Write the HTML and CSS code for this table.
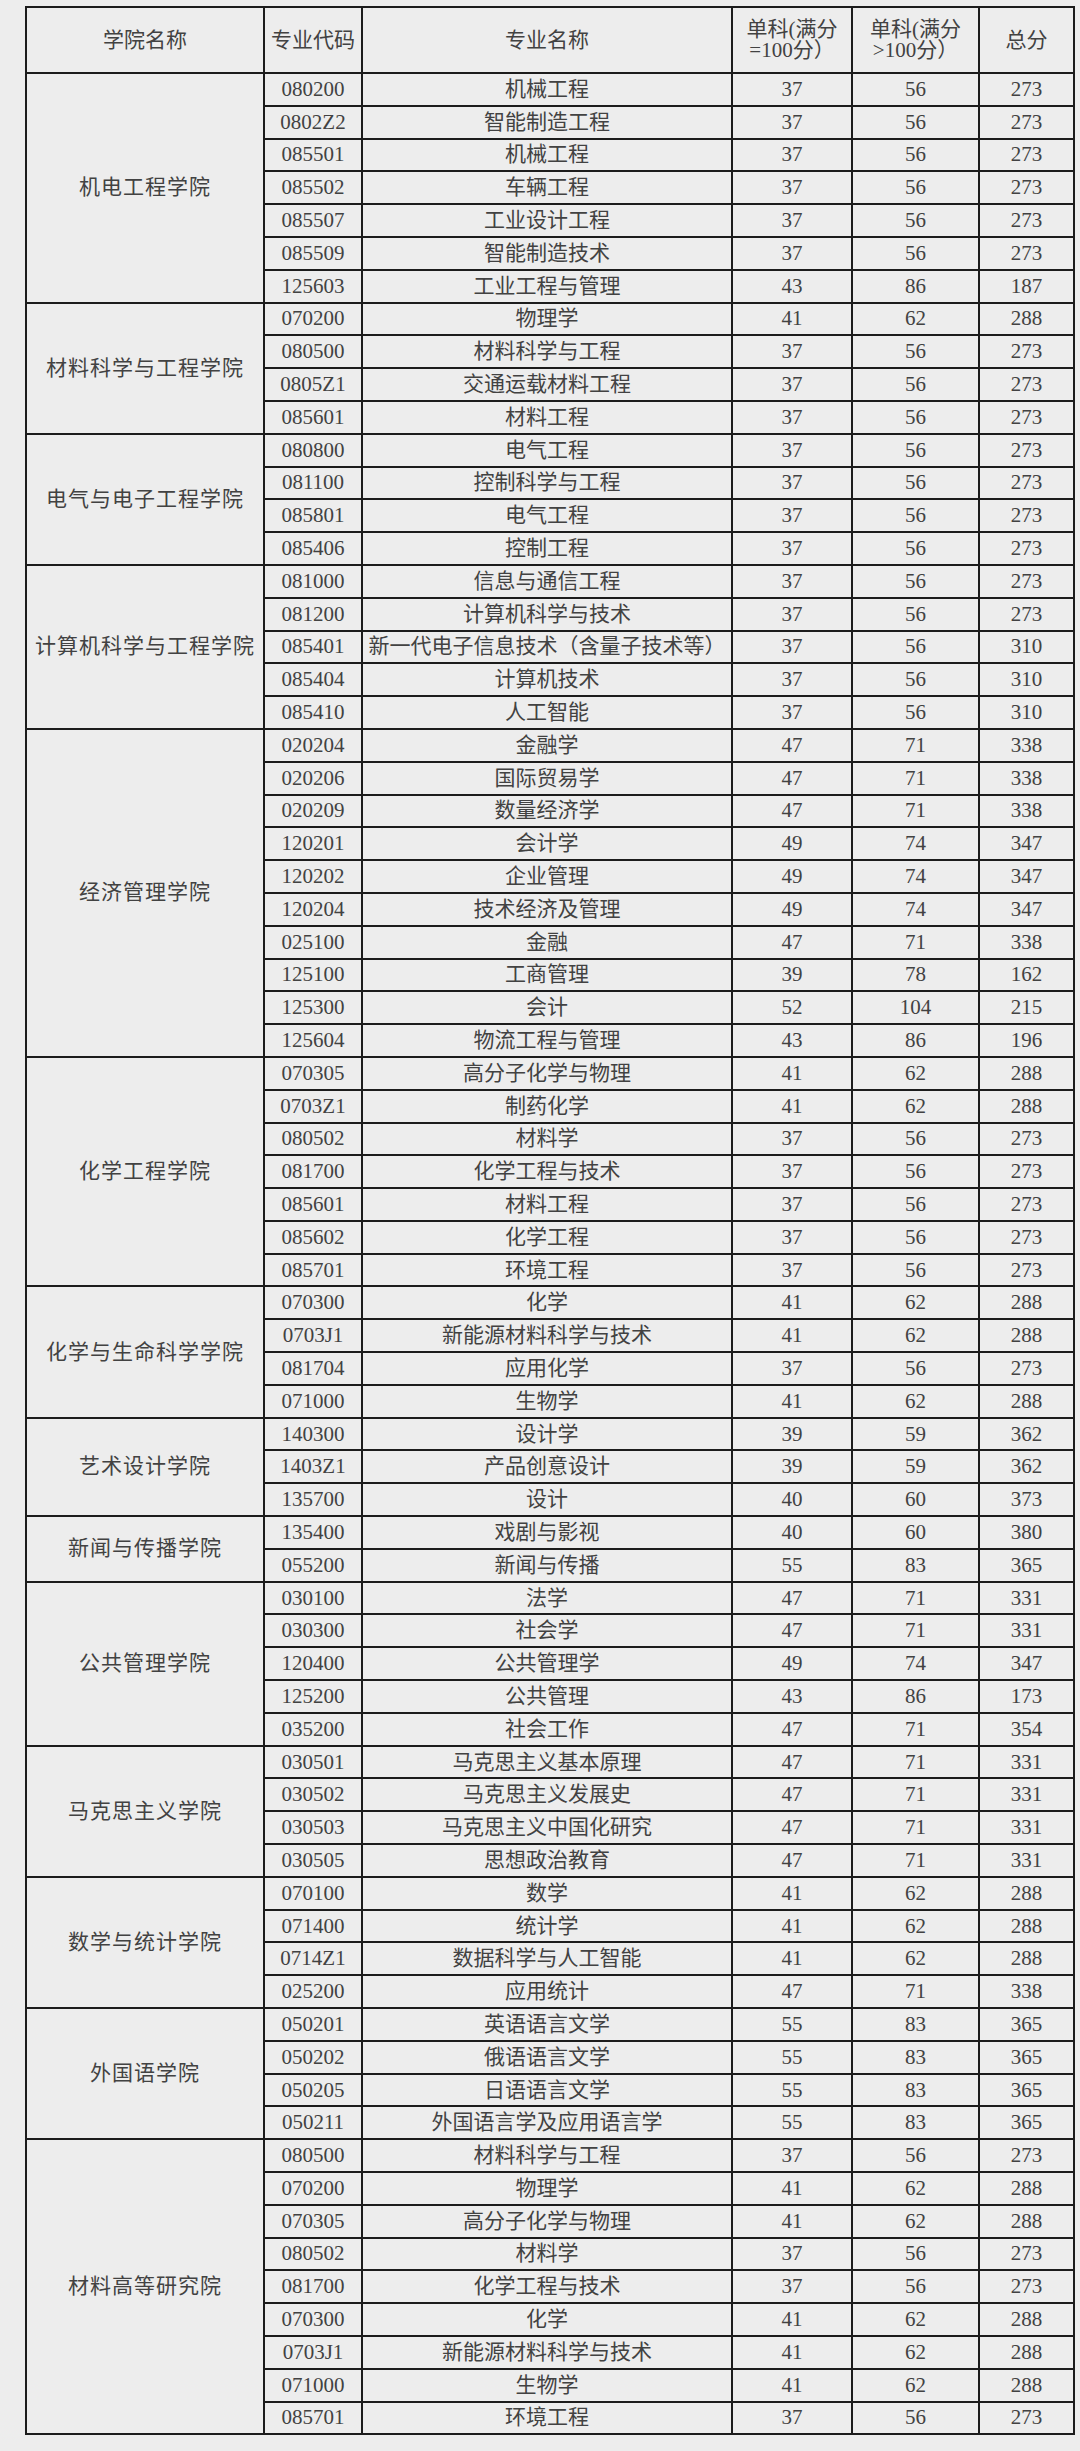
FILE: index.html
```html
<!DOCTYPE html>
<html lang="zh-CN">
<head>
<meta charset="utf-8">
<title>分数线</title>
<link rel="stylesheet" href="styles.css">
</head>
<body>
<table class="score-table">
<colgroup>
<col class="c-school"><col class="c-code"><col class="c-major"><col class="c-s1"><col class="c-s2"><col class="c-total">
</colgroup>
<thead>
<tr class="head-row"><th>学院名称</th><th>专业代码</th><th>专业名称</th><th>单科(满分<br>=100分）</th><th>单科(满分<br>&gt;100分）</th><th>总分</th></tr>
</thead>
<tbody>
<tr><td class="school" rowspan="7">机电工程学院</td><td>080200</td><td>机械工程</td><td>37</td><td>56</td><td>273</td></tr>
<tr><td>0802Z2</td><td>智能制造工程</td><td>37</td><td>56</td><td>273</td></tr>
<tr><td>085501</td><td>机械工程</td><td>37</td><td>56</td><td>273</td></tr>
<tr><td>085502</td><td>车辆工程</td><td>37</td><td>56</td><td>273</td></tr>
<tr><td>085507</td><td>工业设计工程</td><td>37</td><td>56</td><td>273</td></tr>
<tr><td>085509</td><td>智能制造技术</td><td>37</td><td>56</td><td>273</td></tr>
<tr><td>125603</td><td>工业工程与管理</td><td>43</td><td>86</td><td>187</td></tr>

<tr><td class="school" rowspan="4">材料科学与工程学院</td><td>070200</td><td>物理学</td><td>41</td><td>62</td><td>288</td></tr>
<tr><td>080500</td><td>材料科学与工程</td><td>37</td><td>56</td><td>273</td></tr>
<tr><td>0805Z1</td><td>交通运载材料工程</td><td>37</td><td>56</td><td>273</td></tr>
<tr><td>085601</td><td>材料工程</td><td>37</td><td>56</td><td>273</td></tr>

<tr><td class="school" rowspan="4">电气与电子工程学院</td><td>080800</td><td>电气工程</td><td>37</td><td>56</td><td>273</td></tr>
<tr><td>081100</td><td>控制科学与工程</td><td>37</td><td>56</td><td>273</td></tr>
<tr><td>085801</td><td>电气工程</td><td>37</td><td>56</td><td>273</td></tr>
<tr><td>085406</td><td>控制工程</td><td>37</td><td>56</td><td>273</td></tr>

<tr><td class="school" rowspan="5">计算机科学与工程学院</td><td>081000</td><td>信息与通信工程</td><td>37</td><td>56</td><td>273</td></tr>
<tr><td>081200</td><td>计算机科学与技术</td><td>37</td><td>56</td><td>273</td></tr>
<tr><td>085401</td><td>新一代电子信息技术（含量子技术等）</td><td>37</td><td>56</td><td>310</td></tr>
<tr><td>085404</td><td>计算机技术</td><td>37</td><td>56</td><td>310</td></tr>
<tr><td>085410</td><td>人工智能</td><td>37</td><td>56</td><td>310</td></tr>

<tr><td class="school" rowspan="10">经济管理学院</td><td>020204</td><td>金融学</td><td>47</td><td>71</td><td>338</td></tr>
<tr><td>020206</td><td>国际贸易学</td><td>47</td><td>71</td><td>338</td></tr>
<tr><td>020209</td><td>数量经济学</td><td>47</td><td>71</td><td>338</td></tr>
<tr><td>120201</td><td>会计学</td><td>49</td><td>74</td><td>347</td></tr>
<tr><td>120202</td><td>企业管理</td><td>49</td><td>74</td><td>347</td></tr>
<tr><td>120204</td><td>技术经济及管理</td><td>49</td><td>74</td><td>347</td></tr>
<tr><td>025100</td><td>金融</td><td>47</td><td>71</td><td>338</td></tr>
<tr><td>125100</td><td>工商管理</td><td>39</td><td>78</td><td>162</td></tr>
<tr><td>125300</td><td>会计</td><td>52</td><td>104</td><td>215</td></tr>
<tr><td>125604</td><td>物流工程与管理</td><td>43</td><td>86</td><td>196</td></tr>

<tr><td class="school" rowspan="7">化学工程学院</td><td>070305</td><td>高分子化学与物理</td><td>41</td><td>62</td><td>288</td></tr>
<tr><td>0703Z1</td><td>制药化学</td><td>41</td><td>62</td><td>288</td></tr>
<tr><td>080502</td><td>材料学</td><td>37</td><td>56</td><td>273</td></tr>
<tr><td>081700</td><td>化学工程与技术</td><td>37</td><td>56</td><td>273</td></tr>
<tr><td>085601</td><td>材料工程</td><td>37</td><td>56</td><td>273</td></tr>
<tr><td>085602</td><td>化学工程</td><td>37</td><td>56</td><td>273</td></tr>
<tr><td>085701</td><td>环境工程</td><td>37</td><td>56</td><td>273</td></tr>

<tr><td class="school" rowspan="4">化学与生命科学学院</td><td>070300</td><td>化学</td><td>41</td><td>62</td><td>288</td></tr>
<tr><td>0703J1</td><td>新能源材料科学与技术</td><td>41</td><td>62</td><td>288</td></tr>
<tr><td>081704</td><td>应用化学</td><td>37</td><td>56</td><td>273</td></tr>
<tr><td>071000</td><td>生物学</td><td>41</td><td>62</td><td>288</td></tr>

<tr><td class="school" rowspan="3">艺术设计学院</td><td>140300</td><td>设计学</td><td>39</td><td>59</td><td>362</td></tr>
<tr><td>1403Z1</td><td>产品创意设计</td><td>39</td><td>59</td><td>362</td></tr>
<tr><td>135700</td><td>设计</td><td>40</td><td>60</td><td>373</td></tr>

<tr><td class="school" rowspan="2">新闻与传播学院</td><td>135400</td><td>戏剧与影视</td><td>40</td><td>60</td><td>380</td></tr>
<tr><td>055200</td><td>新闻与传播</td><td>55</td><td>83</td><td>365</td></tr>

<tr><td class="school" rowspan="5">公共管理学院</td><td>030100</td><td>法学</td><td>47</td><td>71</td><td>331</td></tr>
<tr><td>030300</td><td>社会学</td><td>47</td><td>71</td><td>331</td></tr>
<tr><td>120400</td><td>公共管理学</td><td>49</td><td>74</td><td>347</td></tr>
<tr><td>125200</td><td>公共管理</td><td>43</td><td>86</td><td>173</td></tr>
<tr><td>035200</td><td>社会工作</td><td>47</td><td>71</td><td>354</td></tr>

<tr><td class="school" rowspan="4">马克思主义学院</td><td>030501</td><td>马克思主义基本原理</td><td>47</td><td>71</td><td>331</td></tr>
<tr><td>030502</td><td>马克思主义发展史</td><td>47</td><td>71</td><td>331</td></tr>
<tr><td>030503</td><td>马克思主义中国化研究</td><td>47</td><td>71</td><td>331</td></tr>
<tr><td>030505</td><td>思想政治教育</td><td>47</td><td>71</td><td>331</td></tr>

<tr><td class="school" rowspan="4">数学与统计学院</td><td>070100</td><td>数学</td><td>41</td><td>62</td><td>288</td></tr>
<tr><td>071400</td><td>统计学</td><td>41</td><td>62</td><td>288</td></tr>
<tr><td>0714Z1</td><td>数据科学与人工智能</td><td>41</td><td>62</td><td>288</td></tr>
<tr><td>025200</td><td>应用统计</td><td>47</td><td>71</td><td>338</td></tr>

<tr><td class="school" rowspan="4">外国语学院</td><td>050201</td><td>英语语言文学</td><td>55</td><td>83</td><td>365</td></tr>
<tr><td>050202</td><td>俄语语言文学</td><td>55</td><td>83</td><td>365</td></tr>
<tr><td>050205</td><td>日语语言文学</td><td>55</td><td>83</td><td>365</td></tr>
<tr><td>050211</td><td>外国语言学及应用语言学</td><td>55</td><td>83</td><td>365</td></tr>

<tr><td class="school" rowspan="9">材料高等研究院</td><td>080500</td><td>材料科学与工程</td><td>37</td><td>56</td><td>273</td></tr>
<tr><td>070200</td><td>物理学</td><td>41</td><td>62</td><td>288</td></tr>
<tr><td>070305</td><td>高分子化学与物理</td><td>41</td><td>62</td><td>288</td></tr>
<tr><td>080502</td><td>材料学</td><td>37</td><td>56</td><td>273</td></tr>
<tr><td>081700</td><td>化学工程与技术</td><td>37</td><td>56</td><td>273</td></tr>
<tr><td>070300</td><td>化学</td><td>41</td><td>62</td><td>288</td></tr>
<tr><td>0703J1</td><td>新能源材料科学与技术</td><td>41</td><td>62</td><td>288</td></tr>
<tr><td>071000</td><td>生物学</td><td>41</td><td>62</td><td>288</td></tr>
<tr><td>085701</td><td>环境工程</td><td>37</td><td>56</td><td>273</td></tr>
</tbody>
</table>
</body>
</html>
```

FILE: styles.css
```css
html, body {
  margin: 0;
  padding: 0;
  background: #ededed;
}

body {
  width: 1080px;
  height: 2451px;
  overflow: hidden;
}

.score-table {
  margin: 6px 0 0 25px;
  width: 1050px;
  table-layout: fixed;
  border-collapse: collapse;
  border: 2px solid #1c1c1c;
  font-family: "Liberation Serif", "Noto Sans CJK SC", serif;
  font-size: 21px;
  color: #424242;
}

.c-school { width: 238px; }
.c-code { width: 98px; }
.c-major { width: 370px; }
.c-s1 { width: 120px; }
.c-s2 { width: 127px; }
.c-total { width: 95px; }

.score-table th,
.score-table td {
  border: 2px solid #1c1c1c;
  padding: 0;
  text-align: center;
  vertical-align: middle;
  font-weight: normal;
  line-height: 1;
  white-space: nowrap;
  overflow: hidden;
}

.head-row th {
  height: 64px;
  line-height: 21px;
}

.head-row th.wide {
  letter-spacing: 2px;
}

.score-table tbody tr {
  height: 32.8px;
}

.score-table tbody td {
  height: 30.8px;
}

.school {
  letter-spacing: 1px;
}
```
